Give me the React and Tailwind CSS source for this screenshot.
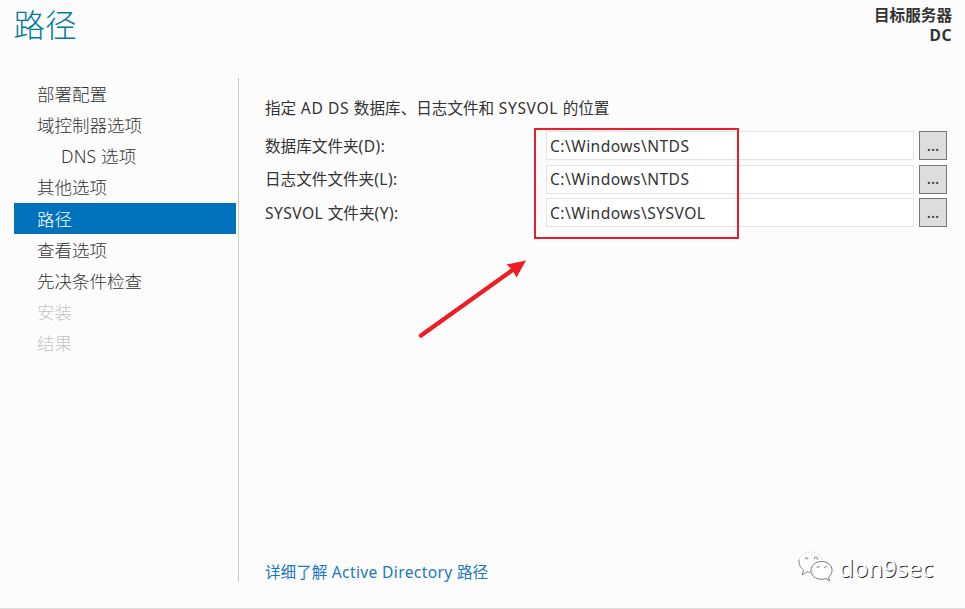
const steps = [
  { label: '部署配置' },
  { label: '域控制器选项' },
  { label: 'DNS 选项', nested: true },
  { label: '其他选项' },
  { label: '路径', active: true },
  { label: '查看选项' },
  { label: '先决条件检查' },
  { label: '安装', disabled: true },
  { label: '结果', disabled: true },
];

const folders = [
  { label: '数据库文件夹(D):', value: 'C:\\Windows\\NTDS' },
  { label: '日志文件文件夹(L):', value: 'C:\\Windows\\NTDS' },
  { label: 'SYSVOL 文件夹(Y):', value: 'C:\\Windows\\SYSVOL' },
];

function stepClass(step) {
  if (step.active) return 'bg-[#0072bc] text-white pl-[23px]';
  if (step.disabled) return 'text-[#c4c4c4] pl-[23px]';
  if (step.nested) return 'text-[#333] pl-[47px] tracking-[0.2px]';
  return 'text-[#333] pl-[23px]';
}

function Steps() {
  return (
    <nav className="flex h-[504px] w-[225px] shrink-0 flex-col border-r-[1.5px] border-[#c8c8c8] text-[17.5px] font-light">
      {steps.map((step) => (
        <div key={step.label} className={`flex h-[31.2px] w-[222px] shrink-0 items-center whitespace-pre pt-[2px] leading-none ${stepClass(step)}`}>
          {step.label}
        </div>
      ))}
    </nav>
  );
}

// Latin runs are tracked slightly wider than the ideographs beside them.
function Mixed({ text, tracking = 'tracking-[0.45px]' }) {
  return text.split(/([\x20-\x7e]+)/).filter(Boolean).map((run, i) => (
    <span key={i} className={/^[\x20-\x7e]/.test(run) ? tracking : ''}>{run}</span>
  ));
}

function FolderRow({ label, value }) {
  return (
    <div className="flex h-[29px] items-center">
      <div className="w-[281px] shrink-0 whitespace-pre pt-[2px]">
        <Mixed text={label} />
      </div>
      <div className="flex h-[29px] w-[368px] items-center border border-[#e3e3ea] bg-white pl-[3px] pt-[2px] tracking-[0.45px]">{value}</div>
      <button className="ml-[5px] flex h-[29px] w-[28px] items-center justify-center border border-[#777] bg-[#dddddd] leading-none">...</button>
    </div>
  );
}

function Watermark() {
  return (
    <div className="absolute left-[798px] top-[551px] flex items-center">
      <svg width="37" height="34" viewBox="0 0 37 34" fill="none">
        <path d="M12.500 1C6 1 1 5.500 1 11c0 3.200 1.700 6 4.500 7.900L4.300 23.500l4.400-2.700c1.500.4 3 .5 4.700.4 0-6 4.600-10 10.400-10.400C22.500 4.500 18.500 1 12.500 1Z" fill="#fff" />
        <path d="M1.200 8.500c-.8 4.500 1 8 4.300 10.400L4.300 24l4.400-3.200c1.300.4 2.500.5 3.800.4" stroke="#777" strokeWidth=".9" />
        <path d="M1.200 8.500C2.500 4 7 1 12.500 1s10.300 3.400 11.300 8" stroke="#cfcfcf" strokeWidth=".7" strokeDasharray="2 1" />
        <path d="M23.500 10.500c-6 0-10.500 4-10.500 8.900s4.500 8.900 10.500 8.900c1.600 0 3-.3 4.300-.8l3.800 2.500-1.200-3.800c2.200-1.700 3.600-4 3.600-6.800 0-4.900-4.500-8.900-10.500-8.900Z" fill="#fff" stroke="#666" strokeWidth=".9" />
        <path d="M7.300 8.300a1.300 1.300 0 1 1 2.300.2M16.300 8a1.600 1.600 0 1 1 2.600.8M19 16.800a1.300 1.300 0 0 1 2.500-.4M26.500 16.800a1.300 1.300 0 0 1 2.500-.4" stroke="#666" strokeWidth=".9" />
      </svg>
      <span className="ml-[4px] text-[24px] leading-[34px] text-[#fcfcfc] [text-shadow:1px_1px_0.5px_#333]">don9sec</span>
    </div>
  );
}

export default function App() {
  return (
    <div className="relative flex h-[609px] w-[965px] flex-col overflow-hidden border-b border-[#dedede] bg-[#fcfcfc] font-['Noto_Sans','Noto_Sans_CJK_SC',sans-serif] text-[15.6px] text-[#333]">
      <header className="flex h-[78px] shrink-0 items-start justify-between pl-[13.5px] pr-[13px]">
        <h1 className="pt-[6px] text-[31.5px] font-light leading-[38px] text-[#007a9c]">路径</h1>
        <div className="pt-[5px] text-right text-[15.6px] font-bold leading-[20px]">
          <div>目标服务器</div>
          <div className="tracking-[0.5px]">DC</div>
        </div>
      </header>
      <div className="flex h-[504px] pl-[14px]">
        <Steps />
        <main className="ml-[26px] flex w-[682px] flex-col">
          <p className="mt-[19px] h-[22px] whitespace-pre leading-[22px]">
            <Mixed text="指定 AD DS 数据库、日志文件和 SYSVOL 的位置" tracking="tracking-[0.6px]" />
          </p>
          <div className="mt-[12px] flex flex-col gap-[4.5px]">
            {folders.map((f) => (
              <FolderRow key={f.label} {...f} />
            ))}
          </div>
          <a className="mt-auto whitespace-pre leading-[19px] text-[#1a78c2]">
            <Mixed text="详细了解 Active Directory 路径" tracking="tracking-[0.35px]" />
          </a>
        </main>
      </div>
      <div className="absolute left-[534px] top-[128px] h-[111px] w-[205px] border-2 border-[#ee1c25]" />
      <svg className="absolute left-[400px] top-[240px]" width="150" height="110" viewBox="0 0 150 110">
        <path d="M21 95.500 114 29" stroke="#ee1c25" strokeWidth="4.400" strokeLinecap="round" />
        <path d="M126 20.500 106.500 24.500 112 29.500 116.500 37.500Z" fill="#ee1c25" />
      </svg>
      <Watermark />
    </div>
  );
}
